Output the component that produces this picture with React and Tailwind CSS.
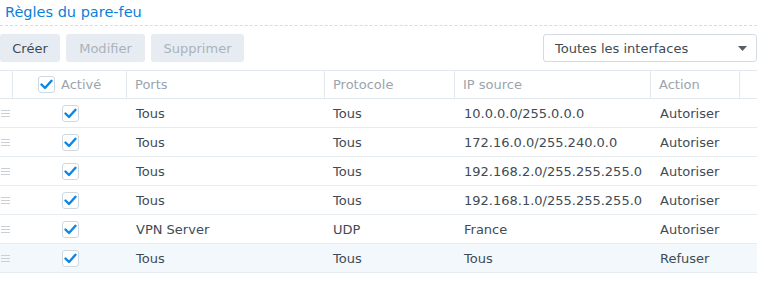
import { ChevronDown } from 'lucide-react';

const rules = [
  { ports: 'Tous', proto: 'Tous', ip: '10.0.0.0/255.0.0.0', action: 'Autoriser' },
  { ports: 'Tous', proto: 'Tous', ip: '172.16.0.0/255.240.0.0', action: 'Autoriser' },
  { ports: 'Tous', proto: 'Tous', ip: '192.168.2.0/255.255.255.0', action: 'Autoriser' },
  { ports: 'Tous', proto: 'Tous', ip: '192.168.1.0/255.255.255.0', action: 'Autoriser' },
  { ports: 'VPN Server', proto: 'UDP', ip: 'France', action: 'Autoriser' },
  { ports: 'Tous', proto: 'Tous', ip: 'Tous', action: 'Refuser', selected: true },
];

function Check() {
  return (
    <span className="w-[17px] h-[17px] rounded-[3px] border border-[#cfd8e2] bg-white flex items-center justify-center">
      <svg width="13" height="11" viewBox="0 0 13 11" fill="none">
        <path d="M1.5 5.5 L5 9 L11.5 1.8" stroke="#0a86e6" strokeWidth="2.4" strokeLinecap="round" strokeLinejoin="round" />
      </svg>
    </span>
  );
}

function Handle() {
  return (
    <span className="flex flex-col gap-[2px] w-[9px]">
      <span className="h-px bg-[#c9d0d8]" />
      <span className="h-px bg-[#c9d0d8]" />
      <span className="h-px bg-[#c9d0d8]" />
    </span>
  );
}

export default function App() {
  return (
    <div className="w-[757px] h-[283px] bg-white overflow-hidden text-[13px] leading-none text-[#414b55]" style={{ fontFamily: '"DejaVu Sans", Verdana, sans-serif' }}>
      {/* Title */}
      <div className="h-[26px] border-b border-dashed border-[#d7dde4] pl-[5px] flex items-center">
        <span className="text-[14.5px] text-[#0a7fd9]">Règles du pare-feu</span>
      </div>

      {/* Toolbar */}
      <div className="h-[44px] flex items-start pt-[8px]">
        <button className="h-[28px] w-[60px] rounded-[3px] bg-[#e6ecf2] text-[#414b55]">Créer</button>
        <button className="h-[28px] w-[79px] ml-[6px] rounded-[3px] bg-[#e6ecf2] text-[#aab3bd]">Modifier</button>
        <button className="h-[28px] w-[93px] ml-[6px] rounded-[3px] bg-[#e6ecf2] text-[#aab3bd]">Supprimer</button>
        <div className="ml-auto h-[28px] w-[214px] border border-[#d3dae2] rounded-[3px] flex items-center pl-[11px] pr-[9px]">
          <span className="flex-1">Toutes les interfaces</span>
          <svg width="9" height="5" viewBox="0 0 9 5"><path d="M0 0 H9 L4.5 5 Z" fill="#555d66" /></svg>
        </div>
      </div>

      {/* Table header */}
      <div className="h-[29px] border-y border-[#e3e8ee] flex text-[#9ba4ae]">
        <div className="w-[13px] border-r border-[#e3e8ee]" />
        <div className="w-[114px] border-r border-[#e3e8ee] flex items-center pl-[25px] gap-[6px]">
          <Check />
          <span>Activé</span>
        </div>
        <div className="w-[198px] border-r border-[#e3e8ee] flex items-center pl-[8px]">Ports</div>
        <div className="w-[130px] border-r border-[#e3e8ee] flex items-center pl-[8px]">Protocole</div>
        <div className="w-[196px] border-r border-[#e3e8ee] flex items-center pl-[8px]">IP source</div>
        <div className="w-[89px] border-r border-[#e3e8ee] flex items-center pl-[8px]">Action</div>
        <div className="flex-1" />
      </div>

      {/* Rows */}
      {rules.map((r, i) => (
        <div key={i} className={`h-[29px] border-b border-[#e6ebf0] flex items-center ${r.selected ? 'bg-[#f3f8fd]' : ''}`}>
          <div className="w-[13px] flex items-center pl-[1px]"><Handle /></div>
          <div className="w-[114px] flex items-center pl-[49px]"><Check /></div>
          <div className="w-[198px] pl-[9px]">{r.ports}</div>
          <div className="w-[130px] pl-[8px]">{r.proto}</div>
          <div className="w-[196px] pl-[9px]">{r.ip}</div>
          <div className="w-[89px] pl-[9px]">{r.action}</div>
        </div>
      ))}
    </div>
  );
}
